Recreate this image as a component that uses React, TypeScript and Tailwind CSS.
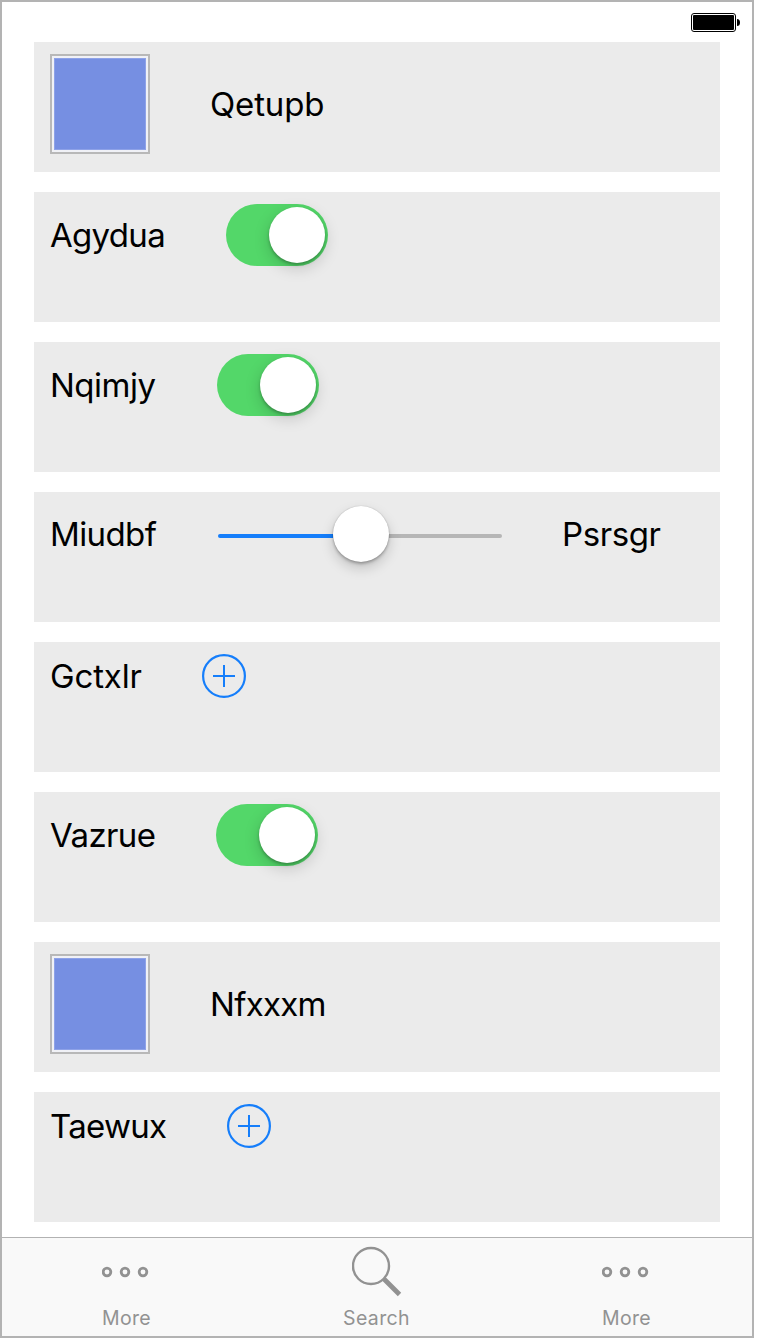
import type { ReactNode } from 'react';

const label = 'block shrink-0 whitespace-nowrap text-[33px] leading-[40px] text-black';

function Row({ children, height }: { children: ReactNode; height: string }) {
  return (
    <section className="h-[130px] bg-[#ebebeb] pl-4 pt-3">
      <div className={`flex items-center ${height}`}>{children}</div>
    </section>
  );
}

function Swatch() {
  return (
    <div className="mr-[60px] size-[100px] border-2 border-[#b8b8b8] bg-[#f0f1f6] p-0.5">
      <div className="size-full border border-[#8ea2e8] bg-[#768fe2]" />
    </div>
  );
}

function Switch() {
  return (
    <div className="flex h-[62px] w-[102px] items-center justify-end rounded-full bg-[#53d769] pr-[3px]">
      <div className="size-14 rounded-full bg-white shadow-[0_2px_3px_rgba(0,0,0,0.25),0_5px_16px_rgba(0,0,0,0.18)]" />
    </div>
  );
}

function Slider() {
  return (
    <div className="mr-[60px] flex h-[60px] w-[284px] items-center">
      <div className="mt-1 h-1 w-[115px] rounded-l-full bg-[#157efb]" />
      <div className="relative size-14 rounded-full bg-white shadow-[0_0_1px_rgba(0,0,0,0.25),0_2px_3px_rgba(0,0,0,0.25),0_6px_13px_rgba(0,0,0,0.18)]" />
      <div className="mt-1 h-1 flex-1 rounded-r-full bg-[#b6b6b6]" />
    </div>
  );
}

function AddButton() {
  return (
    <svg className="size-11" viewBox="0 0 44 44" fill="none" stroke="#157efb" strokeWidth="2">
      <circle cx="22" cy="22" r="20.9" strokeWidth="2.2" />
      <path d="M11 22H33M22 11V33" />
    </svg>
  );
}

function MoreTab() {
  return (
    <div className="flex w-[250px] flex-col items-center">
      <svg className="h-[64px] w-[50px]" viewBox="0 0 50 64" fill="none" stroke="#929292" strokeWidth="2.8">
        <circle cx="5" cy="34" r="3.8" />
        <circle cx="23" cy="34" r="3.8" />
        <circle cx="41" cy="34" r="3.8" />
      </svg>
      <span className="pt-1 pr-px text-[19.5px] leading-6 tracking-[0.35px]">More</span>
    </div>
  );
}

export default function App() {
  return (
    <div className="h-[1340px] w-[760px] bg-white font-['Inter',sans-serif]">
      <div className="flex h-[1338px] w-[754px] flex-col border-2 border-[#b3b3b3] bg-white">
        <header className="flex h-10 justify-end pr-3 pt-[11px]">
          <svg className="h-[19px] w-[50px]" viewBox="0 0 50 19">
            <rect x="1.5" y="0.5" width="44" height="18" rx="2.5" fill="none" stroke="#000" />
            <rect x="3" y="2" width="41" height="15" rx="1" />
            <path d="M47 6Q50 6 50 9.5Q50 13 47 13Z" />
          </svg>
        </header>
        <main className="flex h-[1195px] flex-col gap-5 px-8">
          <Row height="h-[100px]">
            <Swatch />
            <span className={`${label} tracking-[-0.15px]`}>Qetupb</span>
          </Row>
          <Row height="h-[62px]">
            <span className={`${label} w-[176px] tracking-[-0.7px]`}>Agydua</span>
            <Switch />
          </Row>
          <Row height="h-[62px]">
            <span className={`${label} w-[167px] tracking-[-0.5px]`}>Nqimjy</span>
            <Switch />
          </Row>
          <Row height="h-[60px]">
            <span className={`${label} w-[168px] tracking-[-0.6px]`}>Miudbf</span>
            <Slider />
            <span className={`${label} tracking-[-0.4px]`}>Psrsgr</span>
          </Row>
          <Row height="h-11">
            <span className={`${label} w-[152px] tracking-[-0.15px]`}>Gctxlr</span>
            <AddButton />
          </Row>
          <Row height="h-[62px]">
            <span className={`${label} w-[166px] tracking-[-0.6px]`}>Vazrue</span>
            <Switch />
          </Row>
          <Row height="h-[100px]">
            <Swatch />
            <span className={`${label} tracking-[-0.7px]`}>Nfxxxm</span>
          </Row>
          <Row height="h-11">
            <span className={`${label} w-[177px] tracking-[-0.7px]`}>Taewux</span>
            <AddButton />
          </Row>
        </main>
        <nav className="flex h-[99px] border-t border-[#b2b2b2] bg-[#f9f9f9] text-[#929292]">
          <MoreTab />
          <div className="flex w-[250px] flex-col items-center">
            <svg className="h-[64px] w-[50px]" viewBox="0 0 50 64" fill="none" stroke="#929292">
              <circle cx="19" cy="28" r="18" strokeWidth="2.4" />
              <path d="M32 41L47.5 56.5" strokeWidth="4.8" />
            </svg>
            <span className="pt-1 pr-px text-[19.5px] leading-6 tracking-[0.35px]">Search</span>
          </div>
          <MoreTab />
        </nav>
      </div>
    </div>
  );
}
